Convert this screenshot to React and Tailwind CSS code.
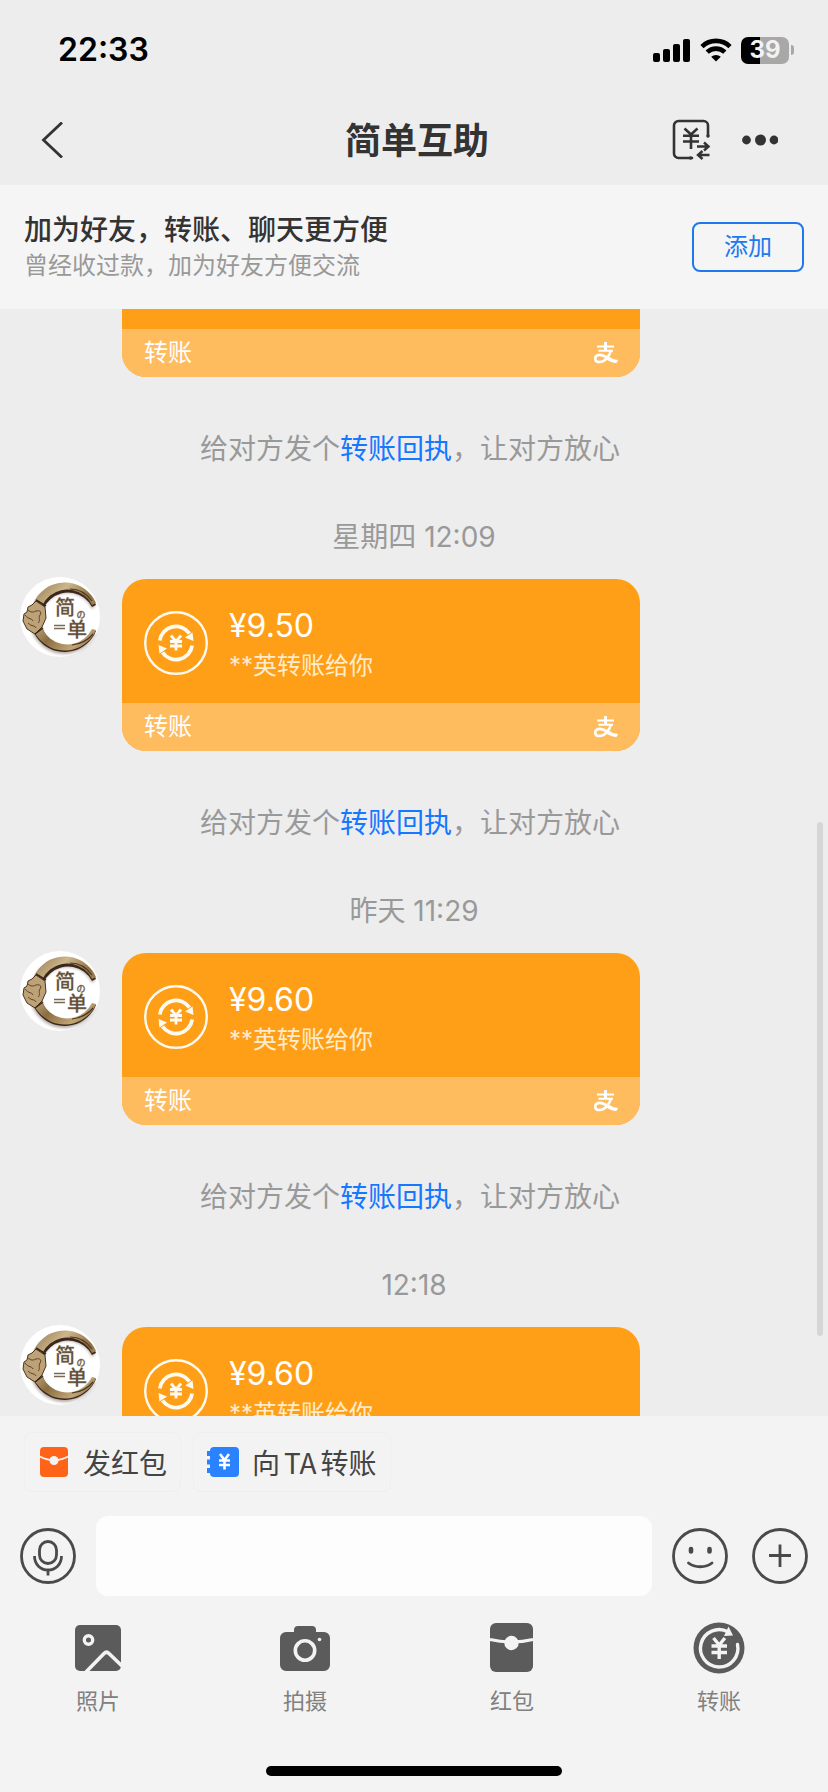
const messages = [
  { id: 2, time: '星期四 12:09', amount: '¥9.50' },
  { id: 3, time: '昨天 11:29', amount: '¥9.60' },
  { id: 4, time: '12:18', amount: '¥9.60' },
];

// Status bar
const StatusBar = () => (
  <div className="flex h-24 items-center justify-between pl-[58px] pr-[34px] pt-1 text-black">
    <span className="text-[32px] font-semibold leading-10">22:33</span>
    <div className="flex items-center gap-[9px]">
      <svg className="h-6 w-[38px]" viewBox="0 0 38 24" fill="currentColor">
        <rect x="0" y="15" width="7" height="9" rx="2" />
        <rect x="10" y="11" width="7" height="13" rx="2" />
        <rect x="20" y="6" width="7" height="18" rx="2" />
        <rect x="30" y="1" width="7" height="23" rx="2" />
      </svg>
      <svg className="h-6 w-8" viewBox="0 0 32 24" fill="none" stroke="currentColor" strokeWidth="4.6">
        <path d="M2 8.6a20 20 0 0 1 28 0" />
        <path d="M7.2 14.2a12.6 12.6 0 0 1 17.6 0" />
        <path d="M16 23.6l-4.8-4.8a7 7 0 0 1 9.6 0z" fill="currentColor" stroke="none" />
      </svg>
      <div className="flex items-center gap-0.5">
        <div className="flex h-[27px] w-12 items-center justify-center rounded-[7px] bg-[linear-gradient(to_right,#000_40%,#a8a8a8_40%)]">
          <span className="text-2xl font-bold leading-none text-[#f2f2f2]">39</span>
        </div>
        <div className="h-2.5 w-[3px] rounded-r-full bg-[#a8a8a8]" />
      </div>
    </div>
  </div>
);

const TransferDocIcon = () => (
  <svg className="h-[42px] w-[40px]" viewBox="0 0 40 42" fill="none" stroke="#333" strokeWidth="2.6">
    <path d="M36 17V6.5A4.5 4.5 0 0 0 31.5 2H6.5A4.5 4.5 0 0 0 2 6.5v28A4.5 4.5 0 0 0 6.5 39H20" strokeLinecap="round" />
    <circle cx="36" cy="17" r="1.7" fill="#333" stroke="none" />
    <circle cx="18.5" cy="39" r="1.7" fill="#333" stroke="none" />
    <path d="M12.5 9.5l6.5 6 6.500-6M19 15.5V30M11 16.8h16M11 22.5h16" />
    <path d="M25 27.500h11.500M32 23.500l4.500 4-4.500 4M37.500 36H26M30.500 32L26 36l4.500 4" strokeWidth="2.4" />
  </svg>
);

const Header = () => (
  <header className="bg-[#ededed]">
    <StatusBar />
    <div className="grid h-[89px] grid-cols-[1fr_auto_1fr] items-center pb-px pl-9 pr-[50px]">
      <button type="button" aria-label="返回" className="justify-self-start">
        <svg className="h-9 w-7" viewBox="0 0 28 36" fill="none" stroke="#333" strokeWidth="2.8">
          <path d="M26 0.5L7.5 18l18.5 17.5" />
        </svg>
      </button>
      <h1 className="pl-5 pt-0.5 text-4xl font-bold text-[#333]">简单互助</h1>
      <div className="flex items-center gap-[30px] justify-self-end">
        <button type="button" aria-label="转账记录">
          <TransferDocIcon />
        </button>
        <button type="button" aria-label="更多">
          <svg className="h-3 w-9" viewBox="0 0 36 12" fill="#333">
            <circle cx="4.5" cy="6" r="4.4" />
            <circle cx="18.5" cy="6" r="5.5" />
            <circle cx="32" cy="6" r="4.4" />
          </svg>
        </button>
      </div>
    </div>
  </header>
);

const FriendBanner = () => (
  <section className="flex h-[124px] shrink-0 items-center justify-between bg-[#f5f5f5] px-6">
    <div className="pt-0.5">
      <h2 className="text-[28px] font-medium leading-9 text-[#333]">加为好友，转账、聊天更方便</h2>
      <p className="text-2xl leading-9 text-[#999]">曾经收过款，加为好友方便交流</p>
    </div>
    <button type="button" className="h-[50px] w-28 rounded-lg border-2 border-[#1f78ee] text-2xl text-[#1f78ee]">
      添加
    </button>
  </section>
);

// Avatar with the bronze ring logo
const Avatar = () => (
  <svg className="-mt-0.5 size-20 shrink-0" viewBox="0 0 80 80" role="img" aria-label="简单互助">
    <defs>
      <linearGradient id="bronze" x1="0" y1="0" x2="1" y2="1">
        <stop offset="0" stopColor="#8c7148" />
        <stop offset="0.3" stopColor="#cdb68c" />
        <stop offset="0.55" stopColor="#8a6d40" />
        <stop offset="0.8" stopColor="#c2a677" />
        <stop offset="1" stopColor="#6b5330" />
      </linearGradient>
      <filter id="soft" x="-20%" y="-20%" width="140%" height="140%">
        <feGaussianBlur stdDeviation="1.5" />
      </filter>
    </defs>
    <circle cx="40" cy="40" r="40" fill="#fff" />
    <path d="M75 29A34 34 0 1 0 75 57L72 54A27 27 0 1 1 72 32z" fill="#6b5750" opacity="0.5" filter="url(#soft)" />
    <path d="M76 28A34 34 0 1 0 76 54L73 53A27 27 0 1 1 72 30z" fill="#3b281c" />
    <path d="M76 26A34 34 0 1 0 76 53L72 52A27.500 27.500 0 1 1 72 28z" fill="url(#bronze)" />
    <path d="M50 12c10 0 17 5 22 12M52 68c9-1 16-5 21-11" fill="none" stroke="#4e371e" strokeWidth="1.2" />
    <path d="M16 24l9 6 1 11-4 9-7 7-8-5-4-8 1-7 3-2 1-5 4-2z" fill="#bda277" stroke="#4a3420" strokeWidth="1" strokeLinejoin="round" />
    <path d="M7 32c3 3 5 4 9 2 4-1 6 1 4 4s1 6-2 8M5 38c4 5 7 3 8 6M8 46c4 4 7 2 8 5" fill="none" stroke="#5c4328" strokeWidth="1" />
    <path d="M16 23l10 6M15 57l8-6" stroke="#39271a" strokeWidth="1.5" />
    <g fontFamily="'Noto Sans CJK SC', sans-serif" fill="#5a4a38" stroke="#8f7a5a" strokeWidth="0.3" fontWeight="500" textAnchor="middle">
      <text x="45" y="38" fontSize="20">简</text>
      <text x="61" y="41" fontSize="9">の</text>
      <text x="57" y="60" fontSize="20">单</text>
    </g>
    <path d="M34 48.500h11M34 51.500h11" stroke="#7a6a52" strokeWidth="1.5" />
  </svg>
);

const TransferIcon = () => (
  <svg className="size-16 shrink-0" viewBox="0 0 64 64" fill="none" stroke="#fffaf0">
    <circle cx="32" cy="32" r="30.8" strokeWidth="2.4" />
    <g strokeWidth="3.8">
      <path d="M15.8 29.5A16.400 16.400 0 0 1 45.500 22.500" />
      <path d="M48.200 34.500A16.400 16.400 0 0 1 18.500 41.500" />
    </g>
    <path d="M41 26.500l8.500 3.500-1-8.500zM23 37.500l-8.500-3.500 1 8.500z" fill="#fffaf0" stroke="none" />
    <path d="M27 24.500l5 6 5-6M32 30v9.500M26 30.500h12M26 35h12" strokeWidth="2.8" />
  </svg>
);

const AlipayIcon = () => (
  <svg className="h-[22px] w-6" viewBox="0 0 24 22" fill="none" stroke="#fff">
    <path d="M11.5 0v8.5" strokeWidth="3" />
    <path d="M3 4.4h17" strokeWidth="2" />
    <path d="M4.500 8.800h14.500" strokeWidth="2" />
    <path d="M17 8.500C15.500 14 11 20 5.500 20 2.500 20 1.200 18.500 1.200 16.500c0-2.200 2-3.600 4.600-3.600 3.800 0 8.700 3.600 12.200 4.800" strokeWidth="2.6" />
    <path d="M14 15.300c3 1.400 6 2.400 10 2.700l-1.500 3c-3.500 0-8-2-11-4z" fill="#fff" stroke="none" />
  </svg>
);

const CardFooter = () => (
  <div className="flex h-12 items-center justify-between bg-[#ffbc5e] px-[22px] text-white">
    <span className="text-2xl">转账</span>
    <AlipayIcon />
  </div>
);

const TransferMessage = ({ amount }) => (
  <div className="flex gap-[22px] pl-5">
    <Avatar />
    <article className="w-[518px] overflow-hidden rounded-3xl bg-[#ff9f18] text-white">
      <div className="flex h-[124px] items-center gap-[21px] px-[22px] pt-1">
        <TransferIcon />
        <div className="pt-1.5">
          <p className="text-[32px] leading-10">{amount}</p>
          <p className="text-2xl leading-10 text-[#ffeccc]">**英转账给你</p>
        </div>
      </div>
      <CardFooter />
    </article>
  </div>
);

const ReceiptHint = () => (
  <p className="mt-[50px] pr-2 text-center text-[28px] leading-[44px] text-[#999]">
    给对方发个
    <a href="#receipt" className="text-[#1677ff]">转账回执</a>
    ，让对方放心
  </p>
);

const Chat = () => (
  <main className="relative min-h-0 flex-1 overflow-hidden bg-[#ededed]">
    {/* Tail of the oldest message in view */}
    <div className="pl-[122px]">
      <div className="w-[518px] overflow-hidden rounded-b-3xl bg-[#ff9f18] pt-5">
        <CardFooter />
      </div>
    </div>
    <ReceiptHint />

    {messages.map((message) => (
      <div key={message.id}>
        <p className="mb-5 pt-11 text-center text-[28px] leading-[44px] text-[#999]">{message.time}</p>
        <TransferMessage amount={message.amount} />
        {message.id !== 4 && <ReceiptHint />}
      </div>
    ))}

    <div className="absolute bottom-20 right-[5px] h-[514px] w-1.5 rounded-full bg-[#d6d6d6]" />
  </main>
);

const RedPacketIcon = () => (
  <svg className="h-[30px] w-8" viewBox="-2 0 32 30">
    <rect width="28" height="30" rx="4" fill="#ff6318" />
    <path d="M0 9.500c4 2.500 9 3.500 14 3.500s10-1 14-3.500" fill="none" stroke="#f3f3f3" strokeWidth="2" />
    <circle cx="14" cy="13.5" r="4.5" fill="#f3f3f3" />
  </svg>
);

const LedgerIcon = () => (
  <svg className="h-[30px] w-8" viewBox="0 0 32 30">
    <rect x="3" width="29" height="30" rx="4" fill="#2a82ff" />
    <path d="M0 4h4v5H0zM0 12.500h4v5H0zM0 21h4v5H0z" fill="#2a82ff" />
    <path d="M13 7l4.500 6L22 7M17.500 12v10.500M12 13.500h11M12 18h11" fill="none" stroke="#fff" strokeWidth="2.6" />
  </svg>
);

const Shortcut = ({ Icon, children }) => (
  <button type="button" className="flex h-[60px] items-center gap-[13px] rounded-lg border border-[#efefef] px-[13px] text-[28px] text-[#444]">
    <Icon />
    <span className="font-['Noto_Sans_CJK_SC',sans-serif] leading-10">{children}</span>
  </button>
);

const MicIcon = () => (
  <svg className="size-14" viewBox="0 0 56 56" fill="none" stroke="#4a4a4a" strokeWidth="2.8">
    <circle cx="28" cy="28" r="26.5" />
    <rect x="19.5" y="13.5" width="17" height="22" rx="8.5" />
    <path d="M14.500 28c0 8.500 6 14 13.500 14s13.500-5.500 13.500-14M28 42v5.500" />
  </svg>
);

const SmileIcon = () => (
  <svg className="size-14" viewBox="0 0 56 56" fill="none" stroke="#4a4a4a" strokeWidth="2.8" strokeLinecap="round">
    <circle cx="28" cy="28" r="26.5" />
    <path d="M19 21v2.500M37.500 21v2.500" strokeWidth="4.6" />
    <path d="M16.500 35c6 5 17.500 5 23.500 0" />
  </svg>
);

const PlusIcon = () => (
  <svg className="size-14" viewBox="0 0 56 56" fill="none" stroke="#4a4a4a" strokeWidth="2.8">
    <circle cx="28" cy="28" r="26.5" />
    <path d="M17 27.500h22M28 16.500v22.500" />
  </svg>
);

const PhotoIcon = () => (
  <svg className="size-[52px]" viewBox="0 0 52 52">
    <rect x="3" y="3" width="46" height="46" rx="5" fill="#5b5b5b" />
    <circle cx="16.5" cy="18" r="4.2" fill="none" stroke="#f3f3f3" strokeWidth="3.4" />
    <path d="M14 50l18-18.500q2.500-2.500 5 0L50 44" fill="none" stroke="#f3f3f3" strokeWidth="3.6" />
  </svg>
);

const CameraIcon = () => (
  <svg className="size-[52px]" viewBox="0 0 52 52">
    <path d="M19 4h14a4 4 0 0 1 4 4v2h8a6 6 0 0 1 6 6v27a6 6 0 0 1-6 6H7a6 6 0 0 1-6-6V16a6 6 0 0 1 6-6h8V8a4 4 0 0 1 4-4z" fill="#5b5b5b" />
    <circle cx="26" cy="28.5" r="9.7" fill="none" stroke="#f3f3f3" strokeWidth="3.6" />
    <circle cx="40.5" cy="17.5" r="1.8" fill="#f3f3f3" />
  </svg>
);

const EnvelopeIcon = () => (
  <svg className="size-[52px]" viewBox="0 0 52 52">
    <rect x="4" y="1" width="43" height="49" rx="6" fill="#5b5b5b" />
    <path d="M4 17.500q22 5 43 0" fill="none" stroke="#f3f3f3" strokeWidth="3" />
    <circle cx="25.5" cy="21" r="7.2" fill="#f3f3f3" />
  </svg>
);

const TransferRoundIcon = () => (
  <svg className="size-[52px]" viewBox="0 0 52 52" fill="none" stroke="#f3f3f3">
    <circle cx="26" cy="26" r="25.5" fill="#5b5b5b" stroke="none" />
    <path d="M44.500 22.500A18.700 18.700 0 1 1 35 9.800" strokeWidth="3.4" strokeLinecap="round" />
    <path d="M35.500 4.500L40 13.500l-9 .5z" fill="#f3f3f3" stroke="none" />
    <path d="M20.500 16l5.700 7 5.700-7M26.200 22v15M18.500 24h15.500M18.500 30.500h15.500" strokeWidth="3.4" />
  </svg>
);

const tools = [
  { label: '照片', Icon: PhotoIcon },
  { label: '拍摄', Icon: CameraIcon },
  { label: '红包', Icon: EnvelopeIcon },
  { label: '转账', Icon: TransferRoundIcon },
];

const Composer = () => (
  <footer className="flex flex-col bg-[#f3f3f3] pb-4 pt-4">
    <div className="flex gap-3 px-6">
      <Shortcut Icon={RedPacketIcon}>发红包</Shortcut>
      <Shortcut Icon={LedgerIcon}>
        向<span className="mx-1">TA</span>转账
      </Shortcut>
    </div>

    <div className="mt-6 flex items-center gap-5 px-5">
      <button type="button" aria-label="语音">
        <MicIcon />
      </button>
      <input type="text" aria-label="消息" className="h-20 min-w-0 flex-1 rounded-xl bg-[#fdfdfd] px-5 text-[28px] outline-none" />
      <div className="flex gap-6">
        <button type="button" aria-label="表情">
          <SmileIcon />
        </button>
        <button type="button" aria-label="更多功能">
          <PlusIcon />
        </button>
      </div>
    </div>

    <div className="mt-[26px] flex justify-between pl-[58px] pr-[69px]">
      {tools.map(({ label, Icon }) => (
        <button key={label} type="button" className="flex w-20 flex-col items-center gap-[13px] text-[22px] leading-7 text-[#808080]">
          <Icon />
          {label}
        </button>
      ))}
    </div>

    <div className="mt-[51px] h-2.5 w-[296px] self-center rounded-full bg-black" />
  </footer>
);

export default function App() {
  return (
    <div className="flex h-screen flex-col bg-[#ededed] font-['Inter','Noto_Sans_CJK_SC',sans-serif]">
      <Header />
      <FriendBanner />
      <Chat />
      <Composer />
    </div>
  );
}
